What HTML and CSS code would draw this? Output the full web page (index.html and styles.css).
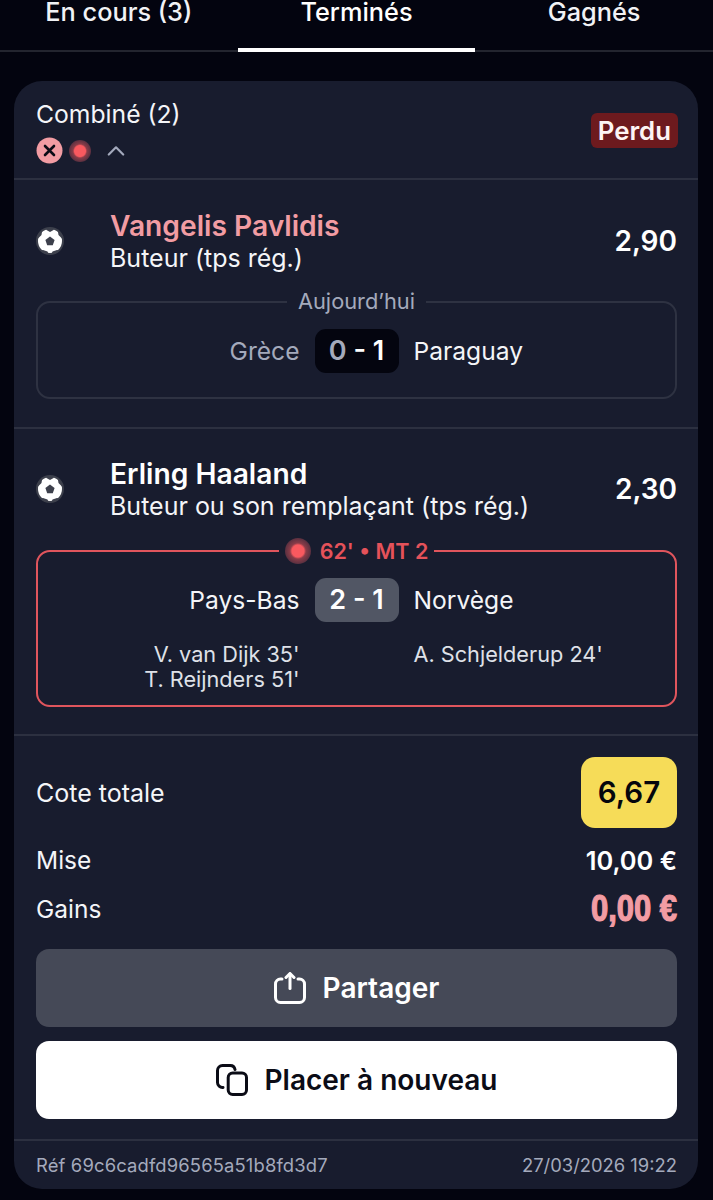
FILE: index.html
```html
<!DOCTYPE html>
<html lang="fr">
<head>
<meta charset="utf-8">
<title>Paris terminés</title>
<link rel="stylesheet" href="styles.css">
</head>
<body>
<nav class="tabs">
  <div class="tab">En cours (3)</div>
  <div class="tab tab-active">Terminés</div>
  <div class="tab">Gagnés</div>
</nav>
<main class="card">
  <header class="card-head">
    <div class="head-left">
      <div class="combo">Combiné (2)</div>
      <div class="status-icons">
        <svg class="ic-x" viewBox="0 0 27 27"><circle cx="13.5" cy="13.5" r="13" fill="#f29ca3"/><path d="M9 9l9 9M18 9l-9 9" stroke="#0b0c16" stroke-width="2.6" stroke-linecap="round"/></svg>
        <span class="live-dot"></span>
        <svg class="ic-chev" viewBox="0 0 20 12"><path d="M2 10.5l8-8 8 8" fill="none" stroke="#a3a9bc" stroke-width="2.4" stroke-linecap="round" stroke-linejoin="round"/></svg>
      </div>
    </div>
    <span class="badge">Perdu</span>
  </header>

  <section class="leg leg-one">
    <div class="leg-main">
      <svg class="ball" viewBox="0 0 28 28"><circle cx="14" cy="14" r="14" fill="#3d404c"/><circle cx="14" cy="14" r="12" fill="#fff"/><path d="M14 9.500l4.600 3.400-1.800 5.400h-5.600l-1.800-5.400z" fill="#3d404c"/><path d="M10 2.800L14 5l4-2.200-1-1.600h-6zM2 11.500l3.500-3.500.6-3.800-2.500 1.500-2 4zM26 11.500L22.500 8l-.6-3.800 2.500 1.500 2 4zM7 23l4.500 1.500 1 2.500-4-.5-3-3zM21 23l-4.500 1.500-1 2.500 4-.5 3-3z" fill="#3d404c"/></svg>
      <div class="leg-text">
        <div class="player player-lost">Vangelis Pavlidis</div>
        <div class="market">Buteur (tps rég.)</div>
      </div>
      <div class="odd">2,90</div>
    </div>
    <div class="match">
      <div class="match-label"><span class="label-text">Aujourd’hui</span></div>
      <div class="score-row">
        <span class="team team-home team-dim">Grèce</span>
        <span class="score score-final"><span class="score-dim">0</span> - 1</span>
        <span class="team">Paraguay</span>
      </div>
    </div>
  </section>

  <section class="leg leg-two">
    <div class="leg-main">
      <svg class="ball" viewBox="0 0 28 28"><circle cx="14" cy="14" r="14" fill="#3d404c"/><circle cx="14" cy="14" r="12" fill="#fff"/><path d="M14 9.500l4.600 3.400-1.800 5.400h-5.600l-1.800-5.400z" fill="#3d404c"/><path d="M10 2.800L14 5l4-2.200-1-1.600h-6zM2 11.500l3.500-3.500.6-3.800-2.500 1.500-2 4zM26 11.500L22.500 8l-.6-3.800 2.500 1.500 2 4zM7 23l4.500 1.500 1 2.500-4-.5-3-3zM21 23l-4.500 1.500-1 2.500 4-.5 3-3z" fill="#3d404c"/></svg>
      <div class="leg-text">
        <div class="player">Erling Haaland</div>
        <div class="market">Buteur ou son remplaçant (tps rég.)</div>
      </div>
      <div class="odd">2,30</div>
    </div>
    <div class="match match-live">
      <div class="match-label"><span class="label-text label-live"><span class="live-dot live-dot-big"></span>62' • MT 2</span></div>
      <div class="score-row">
        <span class="team team-home">Pays-Bas</span>
        <span class="score score-live">2 - 1</span>
        <span class="team">Norvège</span>
      </div>
      <div class="scorers">
        <div class="scorers-home">V. van Dijk 35'<br>T. Reijnders 51'</div>
        <div class="scorers-away">A. Schjelderup 24'</div>
      </div>
    </div>
  </section>

  <section class="summary">
    <div class="sum-row sum-total">
      <span class="total-label">Cote totale</span>
      <span class="total-odd">6,67</span>
    </div>
    <div class="sum-row sum-stake">
      <span>Mise</span>
      <span class="stake">10,00 €</span>
    </div>
    <div class="sum-row sum-gain">
      <span>Gains</span>
      <span class="gain">0,00 €</span>
    </div>
    <button class="btn btn-share">
      <svg class="btn-ic" viewBox="0 0 32 32"><path d="M8 7H6.500A5 5 0 0 0 1.500 12v13.500a5 5 0 0 0 5 5h19a5 5 0 0 0 5-5V12a5 5 0 0 0-5-5H24" fill="none" stroke="#fff" stroke-width="3" stroke-linecap="round"/><path d="M16 16.500V2" fill="none" stroke="#fff" stroke-width="3" stroke-linecap="round"/><path d="M12 5.500L16 1.500l4 4" fill="none" stroke="#fff" stroke-width="3" stroke-linecap="round" stroke-linejoin="round"/></svg>
      Partager
    </button>
    <button class="btn btn-again">
      <svg class="btn-ic" viewBox="0 0 32 32"><rect x="12.200" y="9" width="18.300" height="21.500" rx="4.500" fill="none" stroke="#0b0c16" stroke-width="3"/><path d="M7 23.500A5 5 0 0 1 1.500 18.500V6.500A5 5 0 0 1 6.500 1.500H14a5 5 0 0 1 5 4" fill="none" stroke="#0b0c16" stroke-width="3" stroke-linecap="round"/></svg>
      Placer à nouveau
    </button>
  </section>

  <footer class="card-foot">
    <span class="ref">Réf 69c6cadfd96565a51b8fd3d7</span>
    <span>27/03/2026 19:22</span>
  </footer>
</main>
</body>
</html>
```

FILE: styles.css
```css
* { box-sizing: border-box; }
html, body { margin: 0; height: 1200px; overflow: hidden; }
body {
  background: #03040f;
  color: #fff;
  font-family: Inter, "Liberation Sans", sans-serif;
  font-size: 24.500px;
}
.tabs {
  display: grid;
  grid-template-columns: repeat(3, 1fr);
  height: 52px;
  border-bottom: 2px solid #23252f;
}
.tab {
  height: 52px;
  text-align: center;
  font-size: 25.300px;
  font-weight: 500;
  line-height: 24px;
  color: #f1f2f5;
}
.tab-active {
  color: #fff;
  border-bottom: 4px solid #fff;
}
.card {
  margin: 29px 15px 0 14px;
  height: 1108px;
  background: #181c2e;
  border-radius: 28px;
  display: flex;
  flex-direction: column;
}
.card-head {
  height: 99px;
  padding: 18px 20px 0 22px;
  display: flex;
  justify-content: space-between;
  border-bottom: 2px solid #2c3040;
}
.combo { font-size: 24.700px; line-height: 30px; color: #f4f5f8; }
.status-icons {
  display: flex;
  align-items: center;
  margin-top: 8px;
}
.ic-x { width: 27px; height: 27px; }
.live-dot {
  display: inline-block;
  width: 22px;
  height: 22px;
  border-radius: 50%;
  background: radial-gradient(circle, #f9595f 0 5.500px, #8a3c48 7px, #5a3040 11px);
  flex: none;
}
.live-dot-big {
  width: 26px;
  height: 26px;
  background: radial-gradient(circle, #f9595f 0 6px, #8a3c48 8px, #5a3040 13px);
}
.status-icons .live-dot { margin-left: 6px; }
.ic-chev { width: 18px; height: 11px; margin-left: 16px; }
.badge {
  margin-top: 14px;
  height: 35px;
  padding: 0 7px;
  border-radius: 6px;
  background: #6d1a1e;
  font-size: 25.800px;
  font-weight: 600;
  line-height: 35px;
  color: #fdf4f4;
}
.leg { padding: 0 21px 0 22px; border-bottom: 2px solid #2c3040; }
.leg-one { height: 249px; padding-top: 29px; }
.leg-two { height: 307px; padding-top: 28px; }
.leg-main { display: flex; align-items: center; height: 64px; }
.ball { width: 28px; height: 28px; flex: none; }
.leg-text { margin-left: 46px; flex: 1; }
.player { font-size: 28.200px; font-weight: 600; line-height: 34px; color: #fff; }
.player-lost { color: #f29ca3; }
.market { font-size: 25px; line-height: 30px; color: #f4f5f8; }
.odd { font-size: 28px; font-weight: 600; color: #fff; }
.match {
  margin-top: 28px;
  height: 98px;
  border: 2px solid #2e3242;
  border-radius: 14px;
  padding-top: 26px;
  position: relative;
}
.match-live { margin-top: 29px; height: 157px; border-color: #e0555d; }
.match-label {
  position: absolute;
  top: -14px;
  left: 0;
  right: 0;
  display: flex;
  justify-content: center;
}
.label-text {
  background: #181c2e;
  padding: 0 11px;
  font-size: 21.800px;
  line-height: 24px;
  color: #a4aabc;
}
.label-live {
  display: flex;
  align-items: center;
  gap: 9px;
  padding: 0 6px;
  font-size: 21.500px;
  font-weight: 600;
  color: #e5525a;
}
.score-row {
  display: grid;
  grid-template-columns: 1fr 84px 1fr;
  column-gap: 15px;
  align-items: center;
  height: 44px;
}
.team { font-size: 24.600px; color: #f4f5f8; }
.team-home { text-align: right; }
.team-dim { color: #a4aabc; }
.score {
  height: 44px;
  border-radius: 11px;
  text-align: center;
  font-size: 27px;
  font-weight: 600;
  line-height: 44px;
}
.score-final { background: #04050f; }
.score-dim { color: #a4aabc; }
.score-live { background: #515664; }
.scorers {
  display: grid;
  grid-template-columns: 1fr 84px 1fr;
  column-gap: 15px;
  margin-top: 20px;
  font-size: 21.700px;
  line-height: 25px;
  color: #dfe1e8;
}
.scorers-home { text-align: right; }
.scorers-away { grid-column: 3; }
.summary {
  padding: 21px 21px 0 22px;
  height: 405px;
  border-bottom: 2px solid #2c3040;
}
.sum-row {
  display: flex;
  justify-content: space-between;
  align-items: center;
  color: #f4f5f8;
}
.sum-total { height: 71px; }
.total-label { font-size: 25px; }
.total-odd {
  width: 96px;
  height: 71px;
  border-radius: 14px;
  background: #f6dc58;
  color: #05060c;
  text-align: center;
  font-size: 29.500px;
  font-weight: 600;
  line-height: 71px;
}
.sum-stake { height: 34px; margin-top: 15px; }
.stake { font-weight: 600; font-size: 25.400px; color: #fff; }
.sum-gain { height: 34px; margin-top: 15px; }
.gain {
  font-family: "Liberation Sans", sans-serif;
  font-weight: 700;
  font-size: 36px;
  color: #f29ca3;
  -webkit-text-stroke: 1.200px #f29ca3;
  transform: scaleX(0.86);
  transform-origin: right center;
}
.btn {
  display: flex;
  align-items: center;
  justify-content: center;
  gap: 17px;
  width: 100%;
  height: 78px;
  border: 0;
  border-radius: 13px;
  font-family: inherit;
  font-size: 28px;
  font-weight: 600;
}
.btn-share { margin-top: 23px; background: #454957; color: #fff; }
.btn-again { margin-top: 14px; background: #fff; color: #0b0c16; }
.btn-ic { width: 32px; height: 32px; flex: none; }
.card-foot {
  flex: 1;
  padding: 0 21px 0 22px;
  display: flex;
  justify-content: space-between;
  align-items: center;
  font-size: 18.400px;
  color: #a4aabc;
}
.ref { letter-spacing: 0.15px; }
```
